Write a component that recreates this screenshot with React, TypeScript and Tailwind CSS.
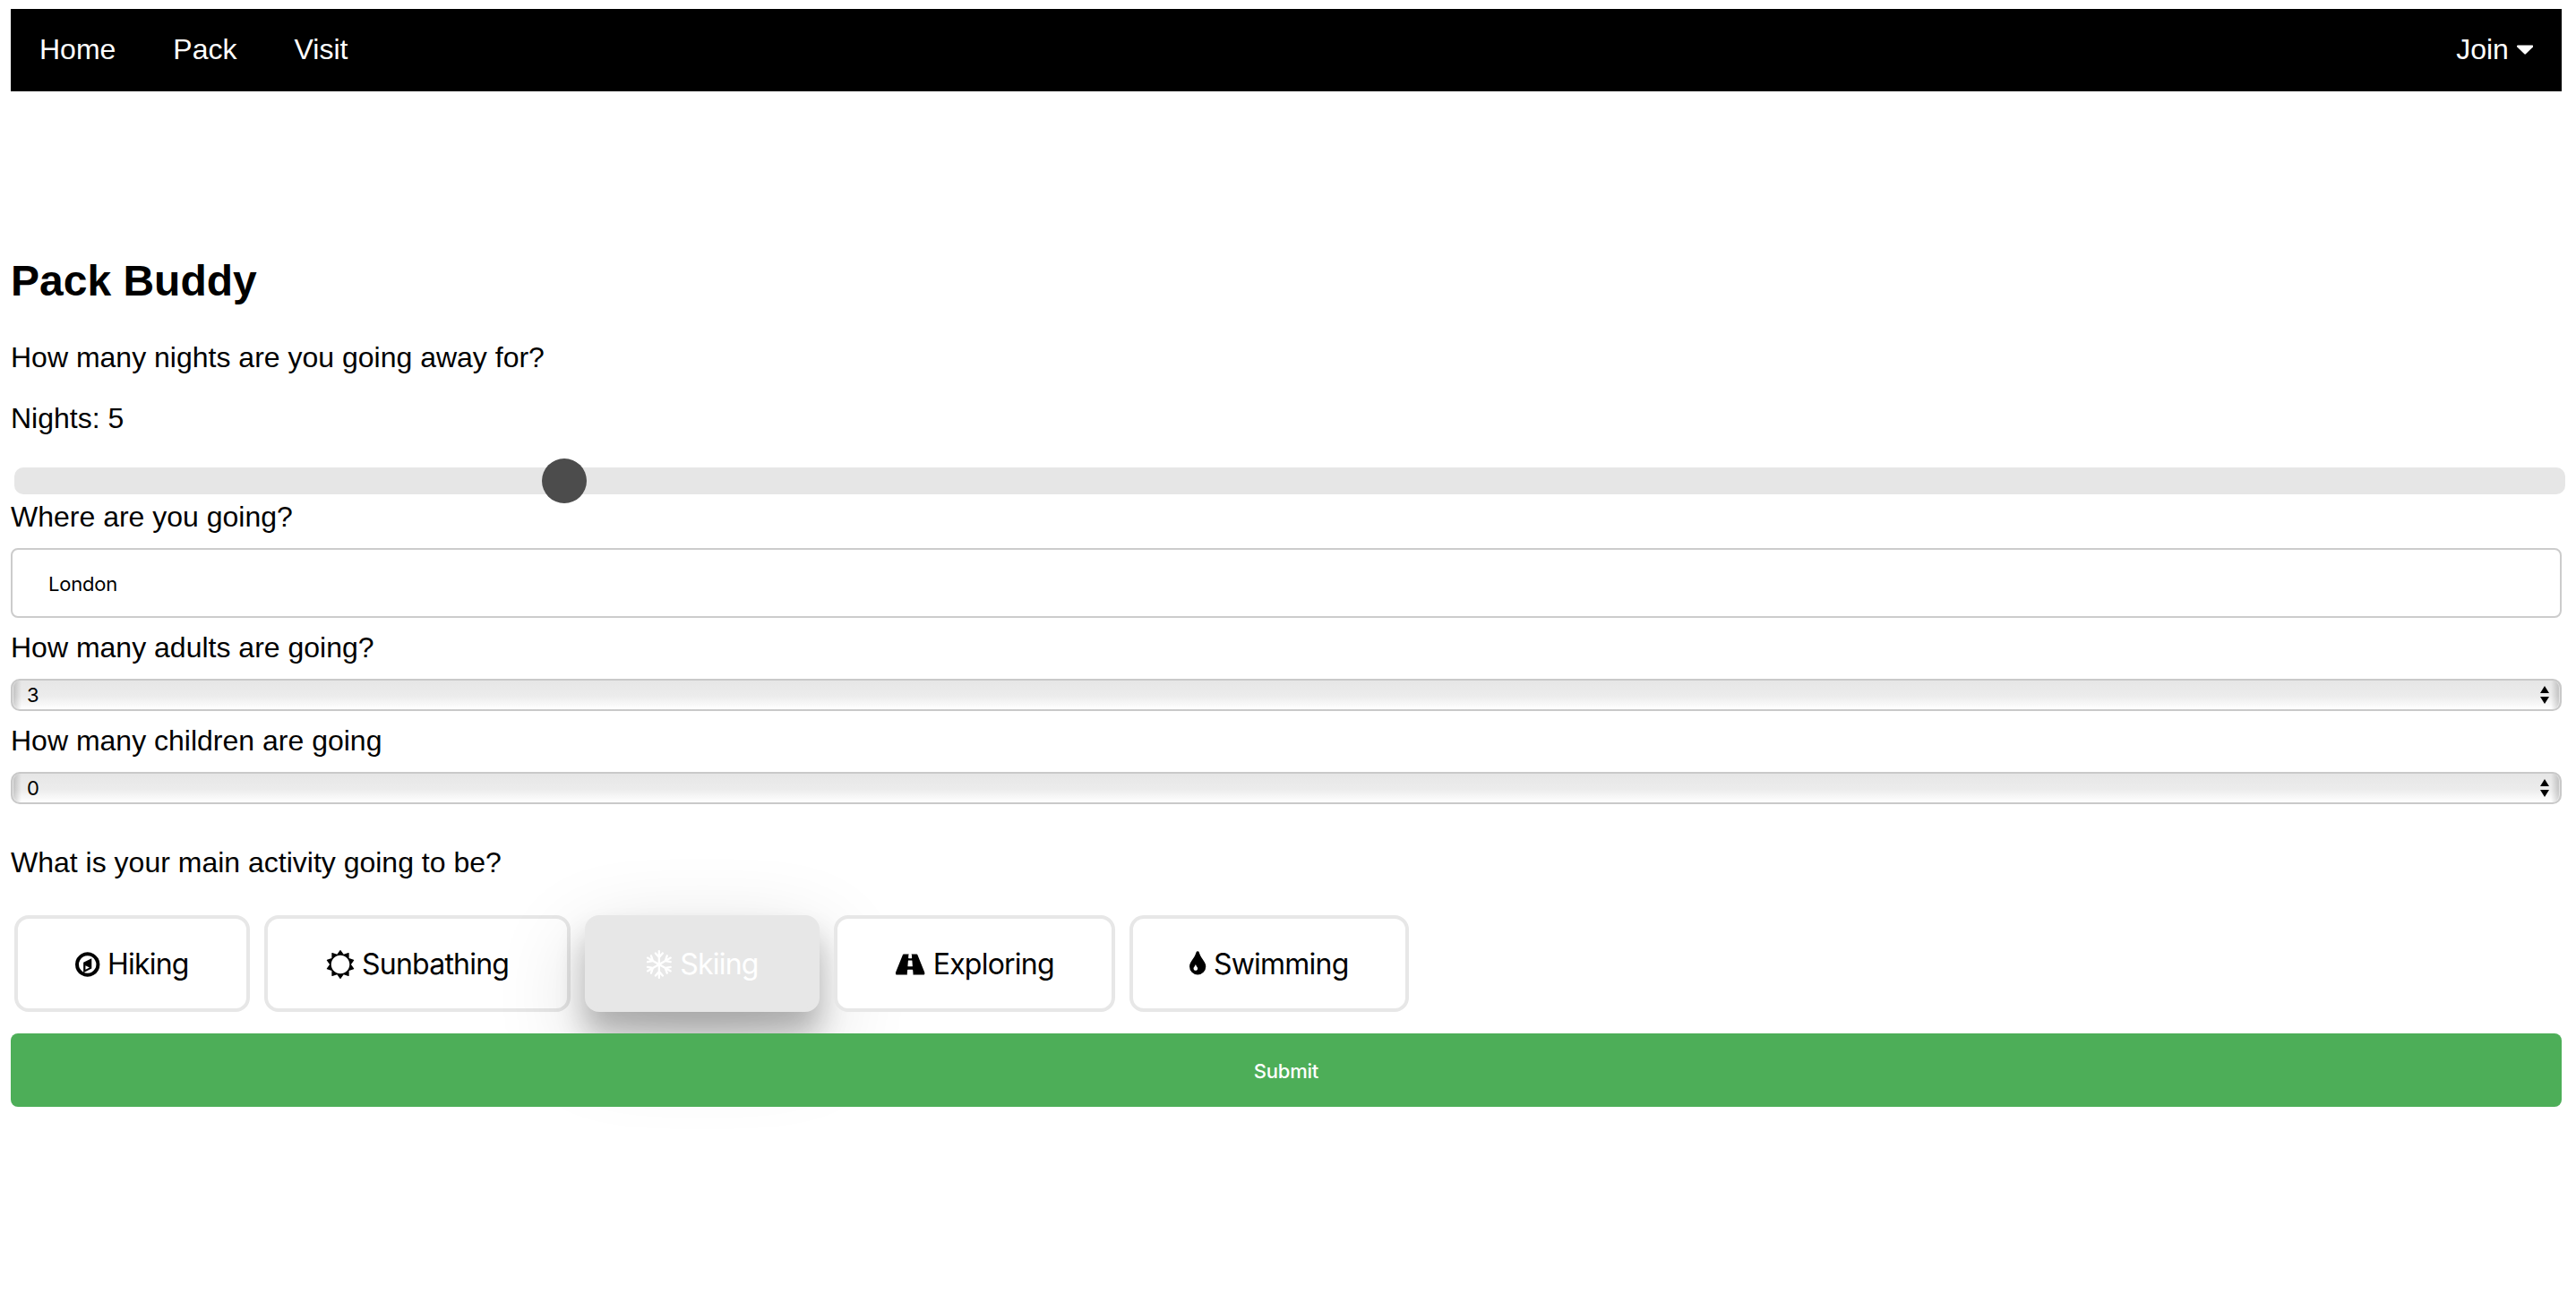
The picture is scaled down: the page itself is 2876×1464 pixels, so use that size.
import React from 'react'

type GlyphName = 'caret' | 'compass' | 'sun' | 'snowflake' | 'road' | 'tint'

// glyph outlines, drawn on a 1792 unit em with y pointing up
const glyphs: Record<GlyphName, { advance: number, d: string }> = {
  caret: {
    advance: 1024,
    d: 'M1024 832q0 -26 -19 -45l-448 -448q-19 -19 -45 -19t-45 19l-448 448q-19 19 -19 45t19 45t45 19h896q26 0 45 -19t19 -45z'
  },
  compass: {
    advance: 1536,
    d: 'M640 320l256 128l-256 128v-256zM1024 1024v-640l-512 -256v640zM1312 640q0 148 -73 273t-198 198t-273 73t-273 -73t-198 -198t-73 -273t73 -273t198 -198t273 -73t273 73t198 198t73 273zM1536 640q0 -209 -103 -385.5t-279.5 -279.5t-385.5 -103t-385.5 103t-279.5 279.5t-103 385.5t103 385.5t279.5 279.5t385.5 103t385.5 -103t279.5 -279.5t103 -385.5z'
  },
  sun: {
    advance: 1792,
    d: 'M1472 640q0 117 -45.5 223.5t-123 184t-184 123t-223.5 45.5t-223.5 -45.5t-184 -123t-123 -184t-45.5 -223.5t45.5 -223.5t123 -184t184 -123t223.5 -45.5t223.5 45.5t184 123t123 184t45.5 223.5zM1748 363q-4 -15 -20 -20l-292 -96v-306q0 -16 -13 -26q-15 -10 -29 -4l-292 94l-180 -248q-10 -13 -26 -13t-26 13l-180 248l-292 -94q-14 -6 -29 4q-13 10 -13 26v306l-292 96q-16 5 -20 20q-5 17 4 29l180 248l-180 248q-9 13 -4 29q4 15 20 20l292 96v306q0 16 13 26q15 10 29 4l292 -94l180 248q9 12 26 12t26 -12l180 -248l292 94q14 6 29 -4q13 -10 13 -26v-306l292 -96q16 -5 20 -20q5 -16 -4 -29l-180 -248l180 -248q9 -12 4 -29z'
  },
  snowflake: {
    advance: 1664,
    d: 'M1566 419l-167 -33l186 -107q23 -13 29.5 -38.5t-6.5 -48.5q-14 -23 -39 -29.5t-48 6.5l-186 106l55 -160q13 -38 -12 -63.5t-60.5 -20.5t-48.5 42l-102 300l-271 156v-313l208 -238q16 -18 17 -39t-11 -36.5t-28.5 -25t-37 -5.5t-36.5 22l-112 128v-214q0 -26 -19 -45t-45 -19t-45 19t-19 45v214l-112 -128q-16 -18 -36.5 -22t-37 5.5t-28.5 25t-11 36.5t17 39l208 238v313l-271 -156l-102 -300q-13 -37 -48.5 -42t-60.5 20.5t-12 63.5l55 160l-186 -106q-23 -13 -48 -6.5t-39 29.5q-13 23 -6.5 48.5t29.5 38.5l186 107l-167 33q-29 6 -42 29t-8.5 46.5t25.5 40t50 10.5l310 -62l271 157l-271 157l-310 -62q-4 -1 -13 -1q-27 0 -44 18t-19 40t11 43t40 26l167 33l-186 107q-23 13 -29.5 38.5t6.5 48.5t39 30t48 -7l186 -106l-55 160q-13 38 12 63.5t60.5 20.5t48.5 -42l102 -300l271 -156v313l-208 238q-16 18 -17 39t11 36.5t28.5 25t37 5.5t36.5 -22l112 -128v214q0 26 19 45t45 19t45 -19t19 -45v-214l112 128q16 18 36.5 22t37 -5.5t28.5 -25t11 -36.5t-17 -39l-208 -238v-313l271 156l102 300q13 37 48.5 42t60.5 -20.5t12 -63.5l-55 -160l186 106q23 13 48 6.5t39 -29.5q13 -23 6.5 -48.5t-29.5 -38.5l-186 -107l167 -33q27 -5 40 -26t11 -43t-19 -40t-44 -18q-9 0 -13 1l-310 62l-271 -157l271 -157l310 62q29 6 50 -10.5t25.5 -40t-8.5 -46.5t-42 -29z'
  },
  road: {
    advance: 1920,
    d: 'M1111 540v4l-24 320q-1 13 -11 22.5t-23 9.5h-186q-13 0 -23 -9.5t-11 -22.5l-24 -320v-4q-1 -12 8 -20t21 -8h244q12 0 21 8t8 20zM1870 73q0 -73 -46 -73h-704q13 0 22 9.5t8 22.5l-20 256q-1 13 -11 22.5t-23 9.5h-272q-13 0 -23 -9.5t-11 -22.5l-20 -256q-1 -13 8 -22.5t22 -9.5h-704q-46 0 -46 73q0 54 26 116l417 1044q8 19 26 33t38 14h339q-13 0 -23 -9.5t-11 -22.5l-15 -192q-1 -14 8 -23t22 -9h166q13 0 22 9t8 23l-15 192q-1 13 -11 22.5t-23 9.5h339q20 0 38 -14t26 -33l417 -1044q26 -62 26 -116z'
  },
  tint: {
    advance: 1024,
    d: 'M512 384q0 36 -20 69q-1 1 -15.5 22.5t-25.5 38t-25 44t-21 50.5q-4 16 -21 16t-21 -16q-7 -23 -21 -50.5t-25 -44t-25.5 -38t-15.5 -22.5q-20 -33 -20 -69q0 -53 37.5 -90.5t90.5 -37.5t90.5 37.5t37.5 90.5zM1024 512q0 -212 -150 -362t-362 -150t-362 150t-150 362q0 145 81 275q6 9 62.5 90.5t101 151t99.5 178t83 201.5q9 30 34 47t51 17t51.5 -17t33.5 -47q28 -93 83 -201.5t99.5 -178t101 -151t62.5 -90.5q81 -127 81 -275z'
  }
}

const Glyph = ({ name }: { name: GlyphName }) => {
  const { advance, d } = glyphs[name]
  return (
    <svg
      className="inline-block h-8 shrink-0 align-[-4.57px]"
      style={{ width: advance / 56 }}
      viewBox={`0 -1536 ${advance} 1792`}
      fill="currentColor"
      aria-hidden="true"
    >
      <path transform="scale(1,-1)" d={d}/>
    </svg>
  )
}

const Nav = () => (
  <nav className="flex h-[92px] items-start justify-between bg-black leading-[90px] text-white">
    <div className="flex">
      <a className="px-8">Home</a>
      <a className="px-8">Pack</a>
      <a className="px-8">Visit</a>
    </div>
    <button className="px-8">Join <Glyph name="caret"/></button>
  </nav>
)

interface CountSelectProps {
  id: string
  value: number
}

const CountSelect = ({ id, value }: CountSelectProps) => (
  <div
    id={id}
    className="flex h-9 items-center justify-between rounded-[10px] border-2 border-[#c9c9c9] bg-[linear-gradient(to_right,#00000030,transparent_10px,transparent_calc(100%-10px),#00000030),linear-gradient(to_bottom,#e6e6e6,#ececec_55%,#fff)] pr-3 pl-4 font-[Inter,sans-serif] text-[22px] leading-8 shadow-[inset_2px_0_1px_-1px_#ffffff99,inset_-2px_0_1px_-1px_#ffffff99]"
  >
    <span>{value}</span>
    <svg className="h-5 w-[10px]" viewBox="0 0 10 20" aria-hidden="true">
      <path d="M5 0l5 8H0zM5 20l5-8H0z"/>
    </svg>
  </div>
)

interface Activity {
  label: string
  icon: GlyphName
  width: string
}

const activities: Activity[] = [
  { label: 'Hiking', icon: 'compass', width: 'w-[263px]' },
  { label: 'Sunbathing', icon: 'sun', width: 'w-[342px]' },
  { label: 'Skiing', icon: 'snowflake', width: 'w-[262px]' },
  { label: 'Exploring', icon: 'road', width: 'w-[314px]' },
  { label: 'Swimming', icon: 'tint', width: 'w-[312px]' }
]

export default function App () {
  const [nights, setNights] = React.useState(5)
  const [city, setCity] = React.useState('London')
  const [selected, setSelected] = React.useState('Skiing')

  return (
    <div className="min-h-[1464px] bg-white px-3 pt-[10px] font-['Liberation_Sans',Arial,sans-serif] text-[32px] leading-9 text-black">
      <div className="w-[2848px]">
        <Nav/>

        <h1 className="mt-[184px] text-5xl leading-[56px] font-bold">Pack Buddy</h1>
        <p className="mt-[39px]">How many nights are you going away for?</p>
        <p className="mt-8">Nights: {nights}</p>

        <input
          type="range"
          min={1}
          max={20}
          value={nights}
          onChange={(e) => { setNights(Number(e.target.value)) }}
          className="mt-[37px] ml-1 block h-[30px] w-full appearance-none rounded-[10px] bg-[#e6e6e6] [&::-webkit-slider-thumb]:size-[50px] [&::-webkit-slider-thumb]:appearance-none [&::-webkit-slider-thumb]:rounded-full [&::-webkit-slider-thumb]:bg-[#4c4c4c]"
        />

        <label className="mt-[7px] block">Where are you going?</label>
        <input
          type="text"
          value={city}
          onChange={(e) => { setCity(e.target.value) }}
          className="mt-[17px] block h-[78px] w-full rounded-lg border-2 border-[#ccc] px-10 pt-0.5 font-[Inter,sans-serif] text-[22px] tracking-[-0.01em]"
        />

        <label className="mt-[15px] mb-[17px] block">How many adults are going?</label>
        <CountSelect id="adults" value={3}/>
        <label className="mt-[15px] mb-[17px] block">How many children are going</label>
        <CountSelect id="children" value={0}/>

        <p className="mt-[47px]">What is your main activity going to be?</p>

        <div className="mt-[41px] ml-1 flex gap-4 font-[Inter,sans-serif] tracking-[-0.024em]">
          {activities.map(({ label, icon, width }) => (
            <button
              key={label}
              onClick={() => { setSelected(label) }}
              className={`${width} h-[108px] rounded-2xl border-4 border-[#e7e7e7] pt-0.5 whitespace-nowrap ${selected === label
                ? 'bg-[#e7e7e7] text-white shadow-[0_24px_32px_0_rgba(0,0,0,0.24),0_34px_100px_0_rgba(0,0,0,0.19)]'
                : 'bg-white'}`}
            >
              <Glyph name={icon}/> {label}
            </button>
          ))}
        </div>

        {/* relative keeps the bar above the selected button's shadow */}
        <button className="relative mt-6 block h-[82px] w-full rounded-lg bg-[#4dae58] pt-0.5 font-[Inter,sans-serif] text-[22px] font-medium tracking-[-0.01em] text-white">
          Submit
        </button>
      </div>
    </div>
  )
}
